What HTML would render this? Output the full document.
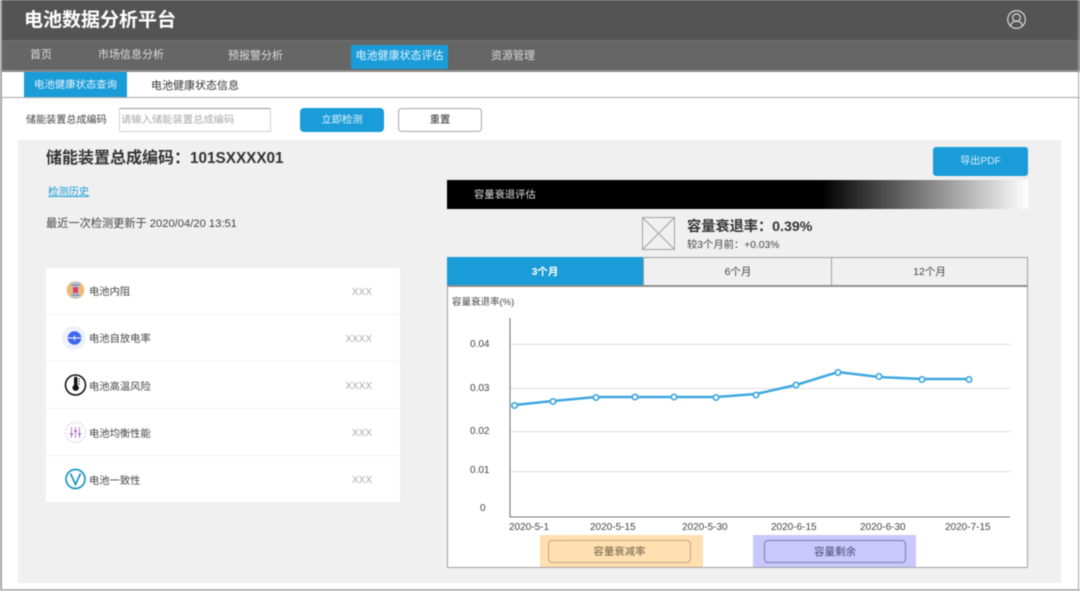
<!DOCTYPE html>
<html lang="zh"><head><meta charset="utf-8"><style>
html,body{margin:0;padding:0;background:#fff}
#p{position:relative;width:1080px;height:591px;overflow:hidden;background:#fff;font-family:"Liberation Sans","Noto Sans CJK SC",sans-serif;color:#333;filter:blur(.45px)}
#p div{position:absolute;box-sizing:border-box}
.t{white-space:nowrap;line-height:16px;font-size:11px}
.c{text-align:center}
.row{left:46px;width:354px;background:#fff}
.lab{left:89px;color:#444}
.val{color:#aaa;text-align:right;right:708px}
svg{position:absolute;overflow:visible}
</style></head><body><div id="p">
<div style="left:0;top:0;width:1080px;height:41px;background:#545454;border-bottom:1px solid #6f6f6f"></div>
<div class="t" style="left:24px;top:8px;font-size:19px;line-height:26px;font-weight:bold;color:#fff">电池数据分析平台</div>
<svg style="left:1007px;top:10px" width="19" height="19" viewBox="0 0 19 19" fill="none" stroke="#e4e4e4" stroke-width="1.1"><circle cx="9.5" cy="9.5" r="8.8"/><circle cx="9.5" cy="7.6" r="3.8"/><path d="M3.6 16c.6-3.400 2.800-5 5.900-5s5.300 1.600 5.900 5"/></svg>

<div style="left:0;top:41px;width:1080px;height:31px;background:#666;border-bottom:2px solid #8c8c8c"></div>
<div class="t" style="left:30px;top:47px;color:#ddd">首页</div>
<div class="t" style="left:98px;top:47px;color:#ddd">市场信息分析</div>
<div class="t" style="left:228px;top:48px;color:#ddd">预报警分析</div>
<div class="t c" style="left:351px;top:45px;width:97px;height:24px;line-height:22px;background:#1a9cd8;border-radius:2px;color:#e8f5fb">电池健康状态评估</div>
<div class="t" style="left:491px;top:48px;color:#ddd">资源管理</div>

<div class="t c" style="left:24px;top:72px;width:103px;height:25px;line-height:27px;background:#1a9cd8;color:#e6f4fb;font-size:10.400px">电池健康状态查询</div>
<div class="t" style="left:151px;top:78px;color:#333">电池健康状态信息</div>
<div style="left:0;top:97px;width:1080px;height:1px;background:#a6a6a6"></div>

<div class="t" style="left:26px;top:113px;font-size:10.100px;color:#444">储能装置总成编码</div>
<div class="t" style="left:119px;top:108px;width:152px;height:24px;border:1px solid #d2d2d2;border-top:1px solid #999;line-height:24px;padding-left:1px;color:#aaa;font-size:10.300px">请输入储能装置总成编码</div>
<div class="t c" style="left:300px;top:108px;width:84px;height:24px;line-height:25px;background:#1a9cd8;border-radius:4px;color:#e8f5fb;font-size:10.300px">立即检测</div>
<div class="t c" style="left:398px;top:108px;width:84px;height:24px;line-height:23px;background:#fff;border:1px solid #a6a6a6;border-radius:4px;color:#333;font-size:10.300px">重置</div>

<div style="left:18px;top:140px;width:1043px;height:443px;background:#f0f0f0"></div>
<div class="t" style="left:46px;top:149px;font-size:16px;line-height:20px;font-weight:bold;color:#333">储能装置总成编码：<span style="font-size:15.300px">101SXXXX01</span></div>
<div class="t" style="left:48px;top:185px;color:#1a9cd8;text-decoration:underline;font-size:10.300px">检测历史</div>
<div class="t" style="left:46px;top:216px;color:#444;font-size:11.200px">最近一次检测更新于 2020/04/20 13:51</div>

<div class="t c" style="left:933px;top:147px;width:95px;height:29px;line-height:30px;background:#1a9cd8;border-radius:3px;color:#d9eff9;font-size:10.200px">导出PDF</div>

<div style="left:447px;top:180px;width:581px;height:29px;background:linear-gradient(90deg,#000 0,#000 64.500%,#fff 100%)"></div>
<div class="t" style="left:474px;top:188px;color:#ddd;font-size:10.300px">容量衰退评估</div>

<svg style="left:642px;top:217px" width="33" height="33" viewBox="0 0 33 33" fill="none" stroke="#a3a3a3" stroke-width="1"><rect x=".5" y=".5" width="32" height="32"/><path d="M.5.500l32 32M32.500.500l-32 32"/></svg>
<div class="t" style="left:687px;top:218px;font-size:14.200px;line-height:18px;font-weight:bold;color:#333">容量衰退率：0.39%</div>
<div class="t" style="left:687px;top:238px;font-size:10.300px;color:#444">较3个月前：+0.03%</div>

<div style="left:447px;top:257px;width:581px;height:311px;background:#fff;border:1px solid #a0a0a0"></div>
<div class="t c" style="left:447px;top:257px;width:196px;height:29px;line-height:30px;background:#1a9cd8;color:#fff;font-weight:bold;font-size:10.500px">3个月</div>
<div class="t c" style="left:643px;top:258px;width:189px;height:28px;line-height:28px;background:#f0f0f0;border-left:1px solid #a0a0a0;color:#444;font-size:10.500px">6个月</div>
<div class="t c" style="left:831px;top:258px;width:196px;height:28px;line-height:28px;background:#f0f0f0;border-left:1px solid #a0a0a0;color:#444;font-size:10.500px">12个月</div>
<div style="left:447px;top:285px;width:581px;height:2px;background:#8f8f8f"></div>

<div class="t" style="left:452px;top:295px;font-size:9.500px;color:#444">容量衰退率(%)</div>

<svg style="left:0;top:0" width="1080" height="591" fill="none">
<path d="M510 344.500H1010M510 388.500H1010M510 431.500H1010M510 471.500H1010" stroke="#dcdcdc" stroke-width="1"/>
<path d="M510 318V517H1010" stroke="#777" stroke-width="1.100"/>
<polyline points="514,405 553,401 596,397 635,397 674,397 716,397 756,394 796,385 838,372 879,377 922,379 969,379" stroke="#3fa7de" stroke-width="2.500"/>
<g fill="#fff" stroke="#3fa7de" stroke-width="1.700"><circle cx="514.500" cy="405.500" r="2.700"/><circle cx="553" cy="401.500" r="2.700"/><circle cx="596" cy="397.500" r="2.700"/><circle cx="635" cy="397" r="2.700"/><circle cx="674" cy="397" r="2.700"/><circle cx="716" cy="397.500" r="2.700"/><circle cx="756" cy="395" r="2.700"/><circle cx="796" cy="385" r="2.700"/><circle cx="838" cy="372.500" r="2.700"/><circle cx="879" cy="376.500" r="2.700"/><circle cx="922" cy="379.500" r="2.700"/><circle cx="969" cy="379.500" r="2.700"/></g>
</svg>
<div class="t" style="left:470px;top:337px;font-size:10px;color:#444">0.04</div>
<div class="t" style="left:470px;top:381px;font-size:10px;color:#444">0.03</div>
<div class="t" style="left:470px;top:424px;font-size:10px;color:#444">0.02</div>
<div class="t" style="left:470px;top:463px;font-size:10px;color:#444">0.01</div>
<div class="t" style="left:480px;top:501px;font-size:10px;color:#444">0</div>
<div class="t" style="left:509px;top:520px;font-size:10px;color:#444">2020-5-1</div>
<div class="t" style="left:590px;top:520px;font-size:10px;color:#444">2020-5-15</div>
<div class="t" style="left:682px;top:520px;font-size:10px;color:#444">2020-5-30</div>
<div class="t" style="left:771px;top:520px;font-size:10px;color:#444">2020-6-15</div>
<div class="t" style="left:860px;top:520px;font-size:10px;color:#444">2020-6-30</div>
<div class="t" style="left:945px;top:520px;font-size:10px;color:#444">2020-7-15</div>

<div style="left:540px;top:535px;width:163px;height:32px;background:#ffdfb0"></div>
<div class="t c" style="left:548px;top:540px;width:143px;height:23px;line-height:23px;border:1px solid #c2a77f;border-radius:4px;color:#6e5f48;font-size:10.400px">容量衰减率</div>
<div style="left:753px;top:535px;width:163px;height:32px;background:#c8c8fc"></div>
<div class="t c" style="left:764px;top:540px;width:142px;height:23px;line-height:23px;border:1px solid #7c7cae;border-radius:4px;color:#4a4a72;font-size:10.500px">容量剩余</div>

<div class="row" style="top:268px;height:46px"></div>
<div class="row" style="top:315px;height:46px"></div>
<div class="row" style="top:362px;height:46px"></div>
<div class="row" style="top:409px;height:46px"></div>
<div class="row" style="top:456px;height:46px"></div>

<svg style="left:0;top:0" width="1080" height="591" fill="none">
<circle cx="75.500" cy="290" r="8.800" fill="#efb96f"/>
<rect x="71.500" y="282" width="8" height="16" fill="#b9c4dd"/>
<rect x="73" y="287" width="5" height="6" fill="#e2424e"/>
<path d="M71.500 285h8M71.500 295h8" stroke="#6f7a9e" stroke-width="1"/>
<circle cx="74" cy="338" r="12" fill="#eef1fd"/>
<circle cx="74.500" cy="338" r="6.800" fill="#4066f0"/>
<path d="M68 338h13M74.500 335.500v5" stroke="#fff" stroke-width="1"/>
<circle cx="75.500" cy="385" r="10" stroke="#111" stroke-width="1.600"/>
<path d="M74 378.500a1.700 1.700 0 0 1 3.400 0v6.500a3.200 3.200 0 1 1-3.400 0z" fill="#111"/>
<path d="M78 379h2M78 381.500h2M78 384h2" stroke="#111" stroke-width=".8"/>
<circle cx="75.500" cy="432.500" r="10" stroke="#dcb2e6" stroke-width="1" stroke-dasharray="1.500 1.500"/>
<path d="M71.500 427v11M75.500 427v11M79.500 427v11" stroke="#b67fc9" stroke-width="1"/>
<path d="M70 434h3M74 431h3M78 434h3" stroke="#a565bd" stroke-width="1.400"/>
<circle cx="75.500" cy="479" r="9.500" stroke="#1c94c0" stroke-width="1.700"/>
<path d="M70.500 473.500l5 11 5-11" stroke="#1c94c0" stroke-width="1.700"/>
</svg>

<div class="t lab" style="top:285px;font-size:10.300px">电池内阻</div>
<div class="t lab" style="top:332px;font-size:10.300px">电池自放电率</div>
<div class="t lab" style="top:380px;font-size:10.300px">电池高温风险</div>
<div class="t lab" style="top:427px;font-size:10.300px">电池均衡性能</div>
<div class="t lab" style="top:474px;font-size:10.300px">电池一致性</div>
<div class="t val" style="top:285px;font-size:10px">XXX</div>
<div class="t val" style="top:332px;font-size:10px">XXXX</div>
<div class="t val" style="top:379px;font-size:10px">XXXX</div>
<div class="t val" style="top:426px;font-size:10px">XXX</div>
<div class="t val" style="top:473px;font-size:10px">XXX</div>

<div style="left:0;top:0;width:2px;height:591px;background:#a6a6a6"></div>
<div style="left:1078px;top:0;width:1px;height:591px;background:#a6a6a6"></div>
<div style="left:0;top:589px;width:1080px;height:2px;background:#b4b4b4"></div>
</div></body></html>
